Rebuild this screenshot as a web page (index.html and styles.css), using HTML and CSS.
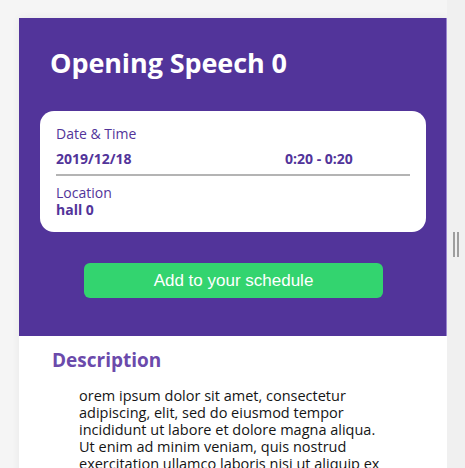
FILE: index.html
```html
<!DOCTYPE html>
<html>
<head>
<meta charset="utf-8">
<link rel="stylesheet" href="styles.css">
</head>
<body>
<div class="page">
  <div class="card">
    <header class="hero">
      <h1 class="title">Opening Speech 0</h1>
      <div class="info">
        <div class="label">Date &amp; Time</div>
        <div class="row">
          <span class="val date">2019/12/18</span>
          <span class="val">0:20 - 0:20</span>
        </div>
        <div class="divider"></div>
        <div class="label">Location</div>
        <div class="val">hall 0</div>
      </div>
      <div class="btn-wrap"><button class="btn">Add to your schedule</button></div>
    </header>
    <section class="desc">
      <h2 class="desc-title">Description</h2>
      <p class="desc-text">orem ipsum dolor sit amet, consectetur<br>adipiscing, elit, sed do eiusmod tempor<br>incididunt ut labore et dolore magna aliqua.<br>Ut enim ad minim veniam, quis nostrud<br>exercitation ullamco laboris nisi ut aliquip ex</p>
    </section>
  </div>
  <div class="gutter"><div class="grip"><span></span><span></span></div></div>
</div>
</body>
</html>
```
FILE: styles.css
```css
html, body {
  margin: 0;
  padding: 0;
  height: 100%;
  overflow: hidden;
}
body {
  background: #f5f5f5;
  font-family: "Open Sans", "Noto Sans", sans-serif;
}
.page {
  display: flex;
  padding-top: 18px;
  padding-left: 19px;
}
.card {
  width: 428px;
  background: #fff;
  box-shadow: 0 0 8px rgba(0,0,0,0.06);
  flex: none;
}
.hero {
  background: #52349a;
  border-right: 1px solid #9a86cf;
  padding: 30px 20px 38px 21px;
}
.title {
  margin: 0 0 33px 10px;
  color: #fff;
  font-size: 27px;
  line-height: 30px;
  font-weight: 700;
  letter-spacing: -0.1px;
}
.info {
  background: #fff;
  border-radius: 14px;
  padding: 14px 16px 14px 16px;
  color: #52349a;
}
.label {
  font-size: 14px;
  line-height: 17px;
}
.row {
  display: flex;
  margin-top: 8px;
}
.date {
  width: 229px;
}
.val {
  font-size: 14px;
  line-height: 17px;
  font-weight: 700;
}
.divider {
  height: 2px;
  background: #b4b4b4;
  margin: 7px 0 8px 0;
}
.btn-wrap {
  display: flex;
  padding-left: 44px;
  margin-top: 31px;
}
.btn {
  width: 299px;
  height: 35px;
  background: #33d46f;
  border: 0;
  border-radius: 6px;
  color: #fff;
  font-family: "Liberation Sans", Arial, sans-serif;
  font-size: 17px;
  padding: 0;
}
.desc {
  padding: 12px 0 0 33px;
}
.desc-title {
  margin: 0;
  color: #6b4aab;
  font-size: 19px;
  line-height: 24px;
  font-weight: 700;
}
.desc-text {
  margin: 15px 0 0 27px;
  font-size: 14.5px;
  line-height: 17px;
  color: #151515;
  white-space: nowrap;
}
.gutter {
  flex: 1;
  background: #f0f0f0;
  margin-top: -18px;
  height: 486px;
}
.grip {
  display: flex;
  gap: 2px;
  margin: 232px 0 0 6px;
}
.grip span {
  width: 2px;
  height: 25px;
  background: #9e9e9e;
}
```
